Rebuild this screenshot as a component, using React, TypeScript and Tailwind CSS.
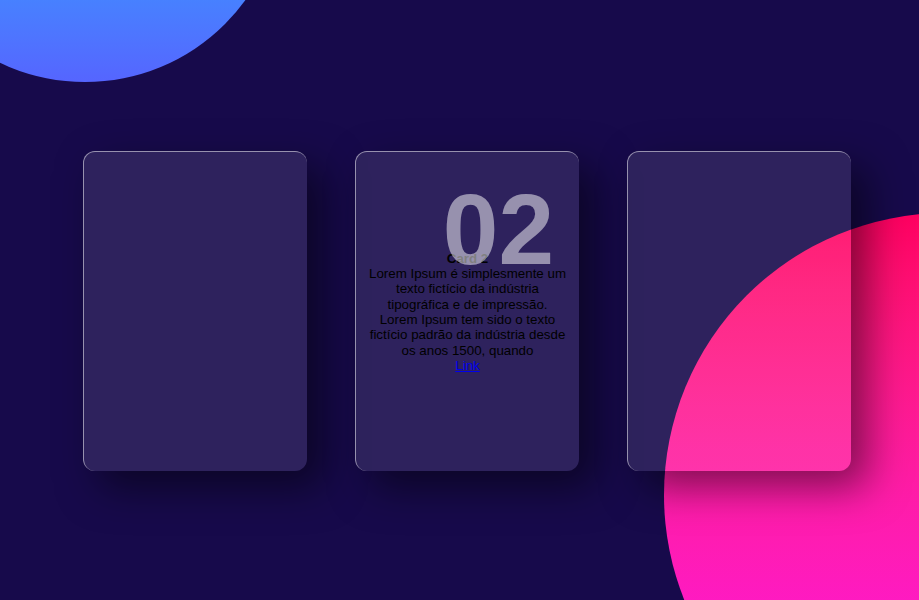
import React from "react";

const cards = [
  { id: 1, filled: false },
  { id: 2, filled: true },
  { id: 3, filled: false },
];

const GlassCard: React.FC<{ id: number; filled: boolean }> = ({ id, filled }) => {
  return (
    <div className="relative w-[224px] h-[320px] shrink-0 rounded-[12px] bg-white/10 border-t border-l border-white/50 shadow-[16px_16px_40px_rgba(0,0,0,0.5)]">
      {filled && (
        <div className="flex h-full items-center justify-center px-3 pt-[2px] text-center text-black text-[13.33px] leading-[15.33px]">
          <div>
            <h3 className="font-bold">Card {id}</h3>
            <p>
              Lorem Ipsum é simplesmente um texto fictício da indústria
              tipográfica e de impressão. Lorem Ipsum tem sido o texto fictício
              padrão da indústria desde os anos 1500, quando
            </p>
            <a href="#" className="text-[#0000ee] underline">
              Link
            </a>
          </div>
          {/* big number sits over the text */}
          <span className="absolute top-[20px] right-[25px] text-[100px] font-bold leading-[normal] text-white/50">
            0{id}
          </span>
        </div>
      )}
    </div>
  );
};

export default function App() {
  return (
    <div
      className="relative h-[600px] w-full overflow-hidden bg-[#170a4b]"
      style={{ fontFamily: '"Liberation Sans", Arial, sans-serif' }}
    >
      <div className="absolute left-[-113px] top-[-314px] h-[396px] w-[396px] rounded-full bg-linear-to-b from-[#4682ff] from-78% to-[#5565ff]" />
      <div className="absolute left-[664px] top-[213px] h-[564px] w-[564px] rounded-full bg-linear-to-b from-[#ff0060] to-[#ff00ea]" />

      <div className="relative flex h-full items-center justify-center gap-[48px] pl-[15px] pt-[21px]">
        {cards.map((c) => (
          <GlassCard key={c.id} id={c.id} filled={c.filled} />
        ))}
      </div>
    </div>
  );
}
